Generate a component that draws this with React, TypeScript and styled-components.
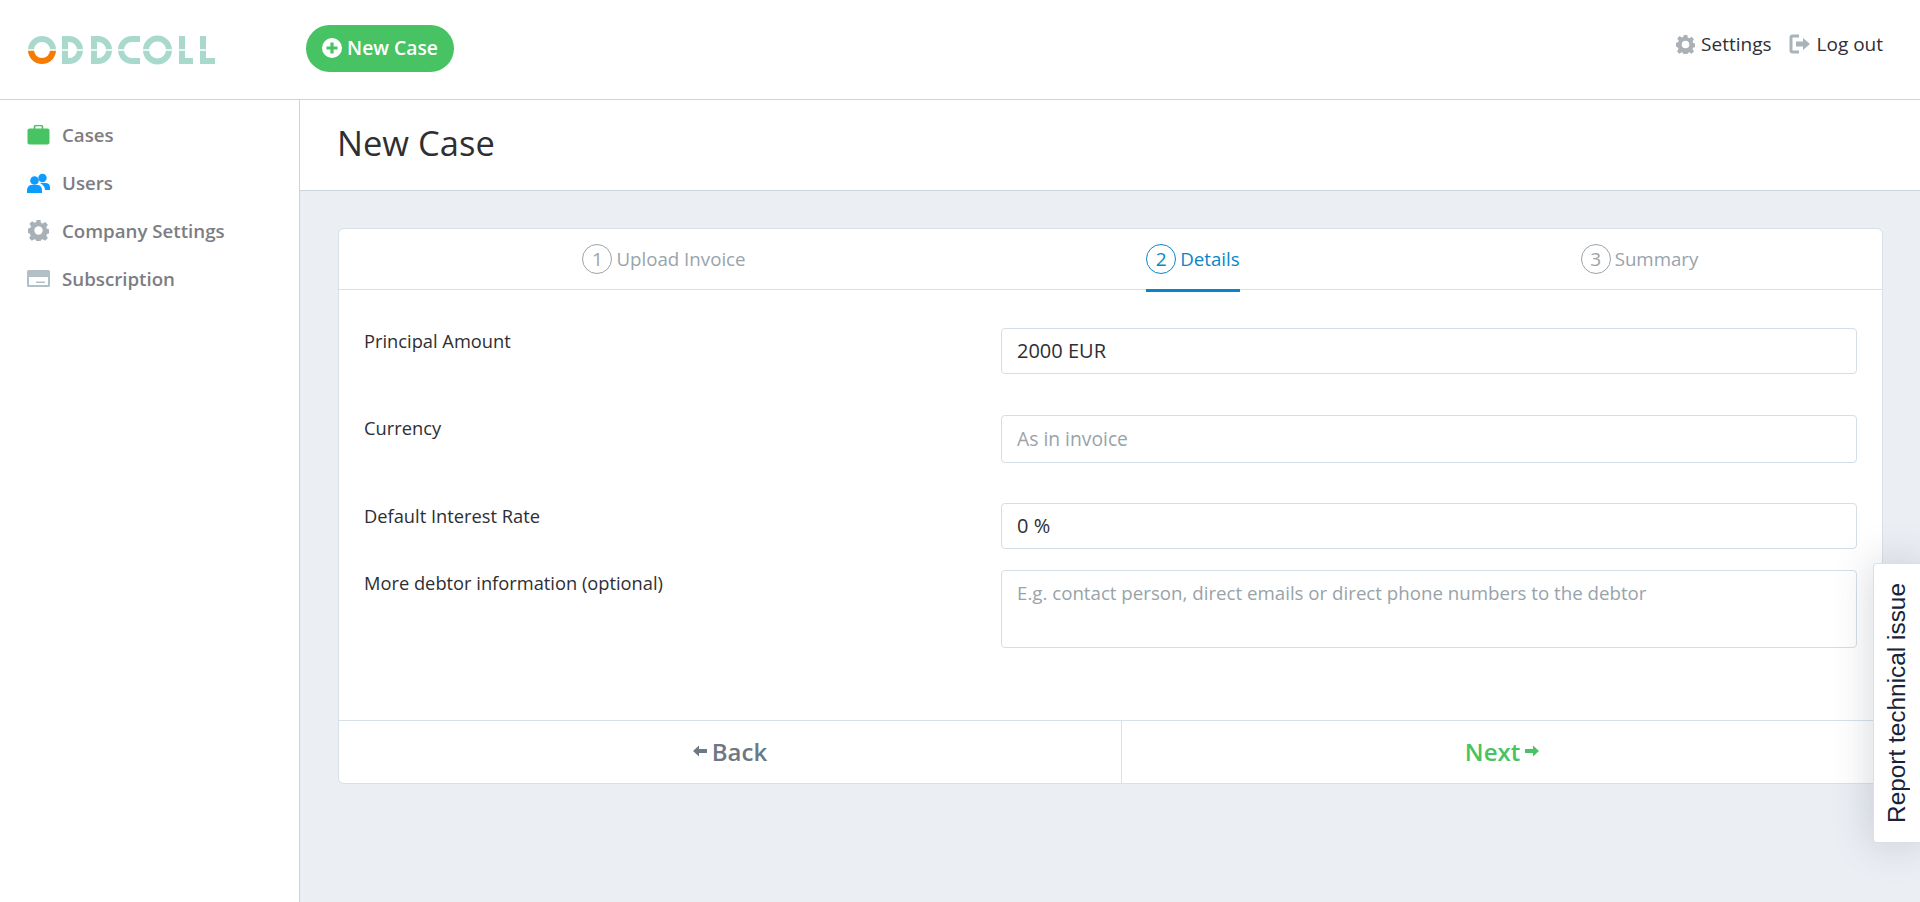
import React from "react";
import styled, { createGlobalStyle } from "styled-components";

const Global = createGlobalStyle`
  html, body { margin: 0; padding: 0; height: 902px; overflow: hidden; background: #fff; }
  body { font-family: "Open Sans", "Liberation Sans", sans-serif; color: #2e2e33; }
  * { box-sizing: border-box; }
`;
const Page = styled.div`height: 902px; display: flex; flex-direction: column; position: relative; overflow: hidden;`;
const TopBar = styled.header`height: 100px; flex: none; display: flex; align-items: flex-start; border-bottom: 1px solid #c9d4dc; background: #fff;`;
const LogoSlot = styled.div`width: 306px; flex: none; padding: 35px 0 0 27px;`;
const NewCaseButton = styled.button`
  margin-top: 25px; width: 148px; height: 47px; border: 0; border-radius: 24px; background: #48c363; color: #fff;
  font: 600 19.300px/44px "Open Sans", sans-serif; display: flex; align-items: center; justify-content: center; gap: 5px; padding: 0 0 2px 0;
`;
const TopLinks = styled.nav`margin-left: auto; padding: 32px 37px 0 0; display: flex; gap: 17px;`;
const TopLink = styled.a`display: flex; align-items: center; gap: 6px; font-size: 19px; line-height: 24px; color: #2e2e38;`;
const Body = styled.div`flex: 1; display: flex; min-height: 0;`;
const SideBar = styled.aside`width: 300px; flex: none; border-right: 1px solid #c9d4dc; padding-top: 11px; background: #fff;`;
const SideItem = styled.a`height: 47.750px; display: flex; align-items: center; gap: 12px; padding-left: 27px; color: #7d7d82; font-size: 18.700px; font-weight: 600;`;
const IconBox = styled.span`width: 23px; height: 23px; display: flex; align-items: center; justify-content: center; flex: none;`;
const Main = styled.main`flex: 1; min-width: 0; background: #ebeef3;`;
const TitleBand = styled.div`height: 91px; background: #fff; border-bottom: 1px solid #c9d4dc; padding: 0 0 6px 37px; display: flex; align-items: center;`;
const Title = styled.h1`margin: 0; font-size: 34.500px; font-weight: 400; color: #2f2f33;`;
const Content = styled.div`padding: 37px 37px 0 38px;`;
const Card = styled.section`height: 556px; background: #fff; border: 1px solid #d8e1e8; border-radius: 6px; display: flex; flex-direction: column;`;
const Steps = styled.div`height: 61px; flex: none; border-bottom: 1px solid #d8e1e8; display: grid; grid-template-columns: 650px 408px 1fr;`;
const StepCell = styled.div`display: flex; justify-content: center;`;
const Step = styled.div<{ $active?: boolean }>`
  height: 63px; display: flex; align-items: center; gap: 4px; font-size: 18.700px; padding-bottom: 1px;
  color: ${p => (p.$active ? "#0a85c9" : "#99a3ab")};
  border-bottom: 3px solid ${p => (p.$active ? "#0a85c9" : "transparent")};
`;
const StepNumber = styled.span<{ $active?: boolean }>`
  width: 30px; height: 30px; border-radius: 50%; border: 1px solid ${p => (p.$active ? "#0a85c9" : "#99a3ab")};
  display: flex; align-items: center; justify-content: center; font-size: 19px;
`;
const Form = styled.div`flex: 1; padding-top: 38px; display: flex; flex-direction: column;`;
const Row = styled.div<{ $h: number; $after: number }>`
  height: ${p => p.$h}px; margin-bottom: ${p => p.$after}px; display: grid; grid-template-columns: 1fr 856px; padding: 0 25px;
`;
const Label = styled.label`font-size: 18.300px; line-height: 26px; color: #2e2e33;`;
const Field = styled.div<{ $placeholder?: boolean; $top?: number; $size?: number }>`
  border: 1px solid #d3dee6; border-radius: 4px; background: #fff; padding: ${p => p.$top ?? 9}px 15px 0;
  font-size: ${p => p.$size ?? 19}px; line-height: 26px; color: ${p => (p.$placeholder ? "#98a3aa" : "#2e2e33")};
`;
const Footer = styled.div`height: 63px; flex: none; border-top: 1px solid #d8e1e8; display: grid; grid-template-columns: 782px 1fr;`;
const FootButton = styled.div<{ $next?: boolean }>`
  display: flex; align-items: center; justify-content: center; gap: 5px; font-size: 24px; font-weight: 600; padding-bottom: 2px;
  color: ${p => (p.$next ? "#48c363" : "#6d7882")};
  border-left: ${p => (p.$next ? "1px solid #d8e1e8" : "0")};
`;
const ReportTab = styled.button`
  position: absolute; right: 0; top: 563px; width: 47px; height: 280px; border: 1px solid #d8e1e8; border-right: 0; border-radius: 4px 0 0 4px;
  background: #fff; box-shadow: 0 0 40px rgba(60, 70, 90, .22); padding: 0; color: #16233a;
  font: 400 24.400px "Liberation Sans", Arial, sans-serif; display: flex; align-items: center; justify-content: center;
`;
const ReportText = styled.span`writing-mode: vertical-rl; transform: rotate(180deg); white-space: nowrap;`;

const A = "#a9d9cc";
const Logo = () => (
  <svg width="190" height="30" viewBox="0 0 190 30" fill="none" aria-label="Oddcoll logo">
    <g stroke={A} strokeWidth="6">
      <path d="M4 15A11 11 0 0 1 26 15" />
      <path d="M38 4H42A11 11 0 0 1 42 26H38Z" />
      <path d="M67 4H71A11 11 0 0 1 71 26H67Z" />
      <path d="M113 4H105A11 11 0 0 0 105 26H113" />
      <circle cx="130.500" cy="15" r="11.500" />
      <path d="M155 1V26H166" />
      <path d="M176 1V26H188" />
    </g>
    <path d="M4 15A11 11 0 0 0 26 15" stroke="#f57c00" strokeWidth="6" />
    <path d="M0 15H190" stroke="#fff" strokeWidth="1.500" />
  </svg>
);
const Plus = () => (
  <svg width="20" height="20" viewBox="0 0 20 20"><circle cx="10" cy="10" r="10" fill="#fff" /><path d="M10 4.500v11M4.500 10h11" stroke="#48c363" strokeWidth="3.200" /></svg>
);
const Gear = ({ size = 23, color = "#a9b1b7" }: { size?: number; color?: string }) => (
  <svg width={size} height={size} viewBox="0 0 24 24" fill={color}>
    <path fillRule="evenodd" d="M9.800 0h4.400l.7 3.300 1.900.8 2.900-1.800 3 3-1.800 2.900.8 1.900 3.300.7v4.400l-3.300.7-.8 1.900 1.800 2.900-3 3-2.900-1.800-1.900.8-.7 3.300H9.800l-.7-3.300-1.900-.8-2.900 1.800-3-3 1.800-2.900-.8-1.900L-.7 14.200V9.800l3.300-.7.8-1.900L1.600 4.300l3-3 2.900 1.800 1.900-.8zM12 7.200a4.800 4.800 0 1 0 0 9.600 4.800 4.800 0 0 0 0-9.600z" />
  </svg>
);
const LogoutIcon = () => (
  <svg width="22" height="20" viewBox="0 0 22 20" fill="none">
    <path d="M10 2H3.500A1.500 1.500 0 0 0 2 3.500v13A1.500 1.500 0 0 0 3.500 18H10" stroke="#a9b4ba" strokeWidth="3" />
    <path d="M7 7.500h7V4l7 6-7 6v-3.500H7z" fill="#a9b4ba" />
  </svg>
);
const Briefcase = () => (
  <svg width="23" height="20" viewBox="0 0 23 20"><path d="M7.500 4V2A1.500 1.500 0 0 1 9 .500h5A1.500 1.500 0 0 1 15.500 2v2" fill="none" stroke="#48c363" strokeWidth="1.600" /><rect x="0.500" y="3.500" width="22" height="16" rx="2" fill="#48c363" /></svg>
);
const Users = () => (
  <svg width="23" height="20" viewBox="0 0 23 20" fill="#0a9dff">
    <circle cx="15.500" cy="5" r="4.200" /><path d="M13 10h5.500c2.500 0 4.500 1.500 4.500 4v3h-5c0-3-1.500-5-5-7z" />
    <circle cx="7.500" cy="7.500" r="4.300" /><path d="M0 20v-3c0-3 2-5 4.500-5h6c2.500 0 4.500 2 4.500 5v3z" />
  </svg>
);
const CardIcon = () => (
  <svg width="23" height="17" viewBox="0 0 23 17"><path fillRule="evenodd" d="M1.500 0h20A1.500 1.500 0 0 1 23 1.500v14a1.500 1.500 0 0 1-1.500 1.500h-20A1.500 1.500 0 0 1 0 15.500v-14A1.500 1.500 0 0 1 1.500 0zM2 7v8h19V7zM9 11.500h9V13H9z" fill="#b3bfc7" /></svg>
);
const ArrowLeft = () => (<svg width="14" height="12" viewBox="0 0 14 12"><path d="M0 6l6-5.500V4h8v4H6v3.500z" fill="#6d7882" /></svg>);
const ArrowRight = () => (<svg width="14" height="12" viewBox="0 0 14 12"><path d="M14 6L8 .5V4H0v4h8v3.500z" fill="#48c363" /></svg>);

export default function App() {
  return (
    <Page>
      <Global />
      <TopBar>
        <LogoSlot><Logo /></LogoSlot>
        <NewCaseButton><Plus />New Case</NewCaseButton>
        <TopLinks>
          <TopLink><Gear size={19} />Settings</TopLink>
          <TopLink><LogoutIcon />Log out</TopLink>
        </TopLinks>
      </TopBar>
      <Body>
        <SideBar>
          <SideItem><IconBox><Briefcase /></IconBox>Cases</SideItem>
          <SideItem><IconBox><Users /></IconBox>Users</SideItem>
          <SideItem><IconBox><Gear size={21} /></IconBox>Company Settings</SideItem>
          <SideItem><IconBox><CardIcon /></IconBox>Subscription</SideItem>
        </SideBar>
        <Main>
          <TitleBand><Title>New Case</Title></TitleBand>
          <Content>
            <Card>
              <Steps>
                <StepCell><Step><StepNumber>1</StepNumber>Upload Invoice</Step></StepCell>
                <StepCell><Step $active><StepNumber $active>2</StepNumber>Details</Step></StepCell>
                <StepCell><Step><StepNumber>3</StepNumber>Summary</Step></StepCell>
              </Steps>
              <Form>
                <Row $h={46} $after={41}><Label>Principal Amount</Label><Field $size={20}>2000 EUR</Field></Row>
                <Row $h={48} $after={40}><Label>Currency</Label><Field $placeholder $top={10} $size={19.3}>As in invoice</Field></Row>
                <Row $h={46} $after={21}><Label>Default Interest Rate</Label><Field $size={20}>0 %</Field></Row>
                <Row $h={78} $after={0}><Label>More debtor information (optional)</Label><Field $placeholder $top={9} $size={18.7}>E.g. contact person, direct emails or direct phone numbers to the debtor</Field></Row>
              </Form>
              <Footer>
                <FootButton><ArrowLeft />Back</FootButton>
                <FootButton $next>Next<ArrowRight /></FootButton>
              </Footer>
            </Card>
          </Content>
        </Main>
      </Body>
      <ReportTab><ReportText>Report technical issue</ReportText></ReportTab>
    </Page>
  );
}
